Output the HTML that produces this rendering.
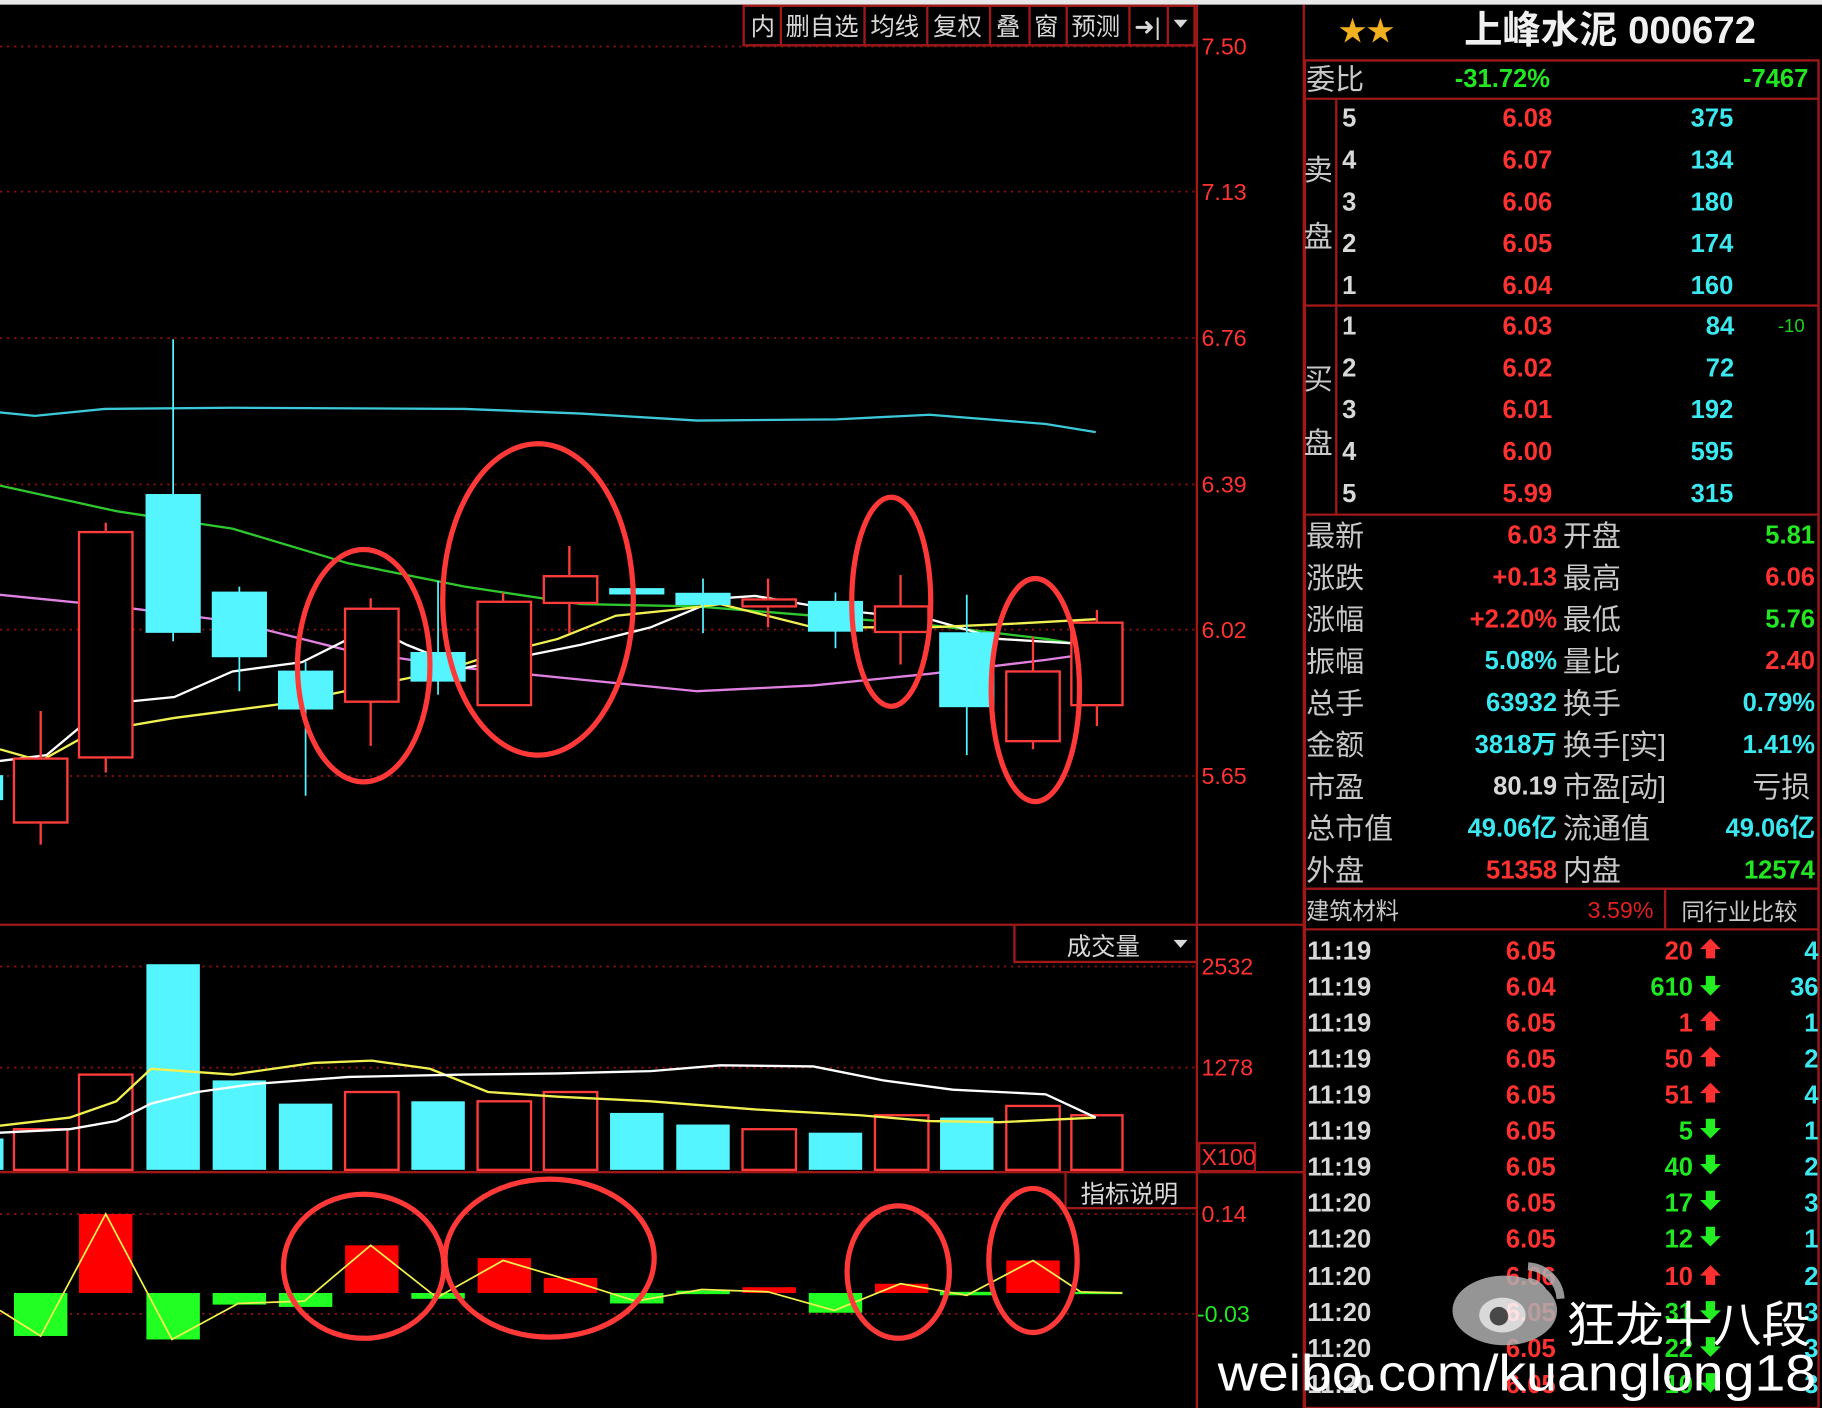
<!DOCTYPE html>
<html><head><meta charset="utf-8"><style>
html,body{margin:0;padding:0;background:#000;width:1822px;height:1408px;overflow:hidden}
svg{display:block}
text{font-family:"Liberation Sans","WenQuanYi Zen Hei","Noto Sans CJK SC",sans-serif}
.n{font-weight:bold;font-size:22px}
.l{fill:#c8c8c8;font-size:25px}
.r{fill:#ff3232}.c{fill:#3ce8f0}.g{fill:#22e622}.w{fill:#d8d8d8}
</style></head><body>
<svg width="1822" height="1408" viewBox="0 0 1568 1212" preserveAspectRatio="none" xmlns="http://www.w3.org/2000/svg">
<rect width="1568" height="1212" fill="#000"/>
<rect x="0" y="0" width="1568" height="4" fill="#e8e8e8"/>
<g stroke="#8a1010" stroke-width="1.5" stroke-dasharray="2,4">
<line x1="0" y1="40" x2="1030" y2="40"/><line x1="0" y1="165" x2="1030" y2="165"/><line x1="0" y1="291" x2="1030" y2="291"/><line x1="0" y1="417" x2="1030" y2="417"/><line x1="0" y1="542" x2="1030" y2="542"/><line x1="0" y1="668" x2="1030" y2="668"/>
<line x1="0" y1="832" x2="1030" y2="832"/><line x1="0" y1="919" x2="1030" y2="919"/>
<line x1="0" y1="1045" x2="1030" y2="1045"/><line x1="0" y1="1131" x2="1030" y2="1131"/>
</g>
<g stroke="#a01818" stroke-width="2" fill="none">
<line x1="1030" y1="4" x2="1030" y2="1212"/>
<line x1="0" y1="796" x2="1122" y2="796"/>
<line x1="0" y1="1009" x2="1122" y2="1009"/>
<line x1="1122" y1="4" x2="1122" y2="1212"/>
<rect x="640" y="5" width="388" height="34"/>
<line x1="672" y1="5" x2="672" y2="39"/><line x1="744" y1="5" x2="744" y2="39"/><line x1="798" y1="5" x2="798" y2="39"/><line x1="852" y1="5" x2="852" y2="39"/><line x1="886" y1="5" x2="886" y2="39"/><line x1="918" y1="5" x2="918" y2="39"/><line x1="972" y1="5" x2="972" y2="39"/><line x1="1005" y1="5" x2="1005" y2="39"/>
<polyline points="873,797 873,828 1030,828"/>
<polyline points="917,1010 917,1040 1030,1040"/>
<rect x="1032" y="984" width="48" height="24"/>
<rect x="1123" y="52" width="442" height="1160"/>
<line x1="1123" y1="85" x2="1565" y2="85"/>
<line x1="1123" y1="263" x2="1565" y2="263"/>
<line x1="1123" y1="443" x2="1565" y2="443"/>
<line x1="1123" y1="765" x2="1565" y2="765"/>
<line x1="1123" y1="800" x2="1565" y2="800"/>
<line x1="1150" y1="85" x2="1150" y2="443"/>
<line x1="1433" y1="765" x2="1433" y2="800"/>
</g>
<g class="w" font-size="21">
<text x="646" y="30">内</text><text x="676" y="30">删自选</text><text x="749" y="30">均线</text><text x="803" y="30">复权</text><text x="857" y="30">叠</text><text x="890" y="30">窗</text><text x="922" y="30">预测</text>
<text x="976" y="30">➜|</text><path d="M1010 17 h12 l-6 7z"/>
<text x="918" y="822" font-size="21">成交量</text><path d="M1010 809 h12 l-6 7z"/>
<text x="930" y="1035" font-size="21">指标说明</text>
</g>
<g fill="#ff3232" font-size="20">
<text x="1034" y="47">7.50</text><text x="1034" y="172">7.13</text><text x="1034" y="298">6.76</text><text x="1034" y="424">6.39</text><text x="1034" y="549">6.02</text><text x="1034" y="675">5.65</text>
<text x="1034" y="839">2532</text><text x="1034" y="926">1278</text><text x="1034" y="1003">X100</text>
<text x="1034" y="1052">0.14</text></g>
<text x="1030" y="1138" font-size="20" fill="#22e622">-0.03</text>
<g fill="none" stroke-width="2">
<polyline stroke="#3cc8d8" points="0,355 30,358 90,352 200,351 400,352 500,356 600,362 720,361 800,357 900,365 943,372"/>
<polyline stroke="#2ec82e" points="0,418 100,440 200,455 300,485 400,505 500,520 600,522 700,530 800,538 900,550 943,557"/>
<polyline stroke="#e080e0" points="0,512 100,522 200,535 300,560 400,575 500,585 600,595 700,590 800,580 900,568 943,562"/>
<polyline stroke="#ffffff" points="0,655 40,650 70,625 100,605 150,600 200,578 260,570 320,540 350,555 400,575 450,565 500,555 560,540 620,515 650,513 720,525 800,533 860,550 943,555"/>
<polyline stroke="#f0f050" points="0,645 35,655 80,630 150,618 250,605 320,590 380,578 420,565 480,550 530,530 580,525 620,520 700,540 800,540 870,537 943,533"/>
</g>
<g stroke="#ff3c3c" stroke-width="2" fill="none">
<line x1="35" y1="612" x2="35" y2="727"/><rect x="12" y="653" width="46" height="55" fill="#000"/>
<line x1="91" y1="450" x2="91" y2="665"/><rect x="68" y="458" width="46" height="194" fill="#000"/>
<line x1="319" y1="515" x2="319" y2="642"/><rect x="297" y="524" width="46" height="80" fill="#000"/>
<line x1="433" y1="510" x2="433" y2="607"/><rect x="411" y="518" width="46" height="89" fill="#000"/>
<line x1="490" y1="470" x2="490" y2="545"/><rect x="468" y="496" width="46" height="23" fill="#000"/>
<line x1="661" y1="498" x2="661" y2="540"/><rect x="639" y="516" width="46" height="6" fill="#000"/>
<line x1="775" y1="495" x2="775" y2="572"/><rect x="753" y="522" width="46" height="22" fill="#000"/>
<line x1="889" y1="548" x2="889" y2="645"/><rect x="866" y="578" width="46" height="60" fill="#000"/>
<line x1="944" y1="525" x2="944" y2="625"/><rect x="922" y="536" width="44" height="71" fill="#000"/>
</g>
<g fill="#55f5ff" stroke="#55f5ff" stroke-width="1.5">
<line x1="149" y1="292" x2="149" y2="552"/><rect x="126" y="426" width="46" height="118"/>
<line x1="206" y1="505" x2="206" y2="595"/><rect x="183" y="510" width="46" height="55"/>
<line x1="263" y1="570" x2="263" y2="685"/><rect x="240" y="578" width="46" height="32"/>
<line x1="377" y1="500" x2="377" y2="598"/><rect x="354" y="562" width="46" height="24"/>
<rect x="525" y="507" width="46" height="4"/>
<line x1="605" y1="498" x2="605" y2="545"/><rect x="582" y="511" width="46" height="9"/>
<line x1="719" y1="510" x2="719" y2="558"/><rect x="696" y="518" width="46" height="25"/>
<line x1="832" y1="512" x2="832" y2="650"/><rect x="809" y="545" width="46" height="63"/>
<rect x="0" y="668" width="2" height="20"/>
</g>
<g stroke="#ff3c3c" stroke-width="2" fill="none">
<rect x="12" y="972" width="46" height="35"/><rect x="68" y="925" width="46" height="82"/><rect x="297" y="940" width="46" height="67"/><rect x="411" y="948" width="46" height="59"/><rect x="468" y="940" width="46" height="67"/><rect x="639" y="972" width="46" height="35"/><rect x="753" y="960" width="46" height="47"/><rect x="866" y="952" width="46" height="55"/><rect x="922" y="960" width="44" height="47"/>
</g>
<g fill="#55f5ff">
<rect x="126" y="830" width="46" height="177"/><rect x="183" y="930" width="46" height="77"/><rect x="240" y="950" width="46" height="57"/><rect x="354" y="948" width="46" height="59"/><rect x="525" y="958" width="46" height="49"/><rect x="582" y="968" width="46" height="39"/><rect x="696" y="975" width="46" height="32"/><rect x="809" y="962" width="46" height="45"/><rect x="0" y="980" width="3" height="27"/>
</g>
<g fill="none" stroke-width="2">
<polyline stroke="#f0f050" points="0,969 60,962 100,948 130,920 200,925 270,915 320,913 370,920 420,940 480,944 560,948 650,955 740,960 800,965 860,966 943,962"/>
<polyline stroke="#ffffff" points="0,975 60,972 100,965 130,950 170,940 220,933 300,927 400,925 480,924 560,922 620,917 700,918 760,930 820,938 900,942 943,962"/>
</g>
<g fill="#ff0000">
<rect x="68" y="1045" width="46" height="68"/><rect x="297" y="1072" width="46" height="41"/><rect x="411" y="1083" width="46" height="30"/><rect x="468" y="1100" width="46" height="13"/><rect x="639" y="1108" width="46" height="5"/><rect x="753" y="1105" width="46" height="8"/><rect x="866" y="1085" width="46" height="28"/>
</g>
<g fill="#22ff22">
<rect x="12" y="1113" width="46" height="37"/><rect x="126" y="1113" width="46" height="40"/><rect x="183" y="1113" width="46" height="10"/><rect x="240" y="1113" width="46" height="12"/><rect x="354" y="1113" width="46" height="5"/><rect x="525" y="1113" width="46" height="9"/><rect x="582" y="1111" width="46" height="3"/><rect x="696" y="1113" width="46" height="17"/><rect x="809" y="1112" width="46" height="3"/><rect x="922" y="1112" width="44" height="2"/>
</g>
<polyline fill="none" stroke="#f0f050" stroke-width="1.5" points="0,1128 35,1150 91,1045 148,1153 205,1122 262,1120 319,1072 376,1117 433,1085 490,1102 547,1120 604,1110 661,1112 718,1128 775,1105 832,1115 889,1085 930,1112 966,1113"/>
<g fill="none" stroke="#ff3838" stroke-width="4.5">
<ellipse cx="313" cy="573" rx="57" ry="100"/><ellipse cx="463" cy="516" rx="82" ry="134"/><ellipse cx="767" cy="518" rx="34" ry="90"/><ellipse cx="891" cy="594" rx="38" ry="96"/>
<ellipse cx="313" cy="1090" rx="69" ry="62"/><ellipse cx="473" cy="1083" rx="90" ry="68"/><ellipse cx="773" cy="1095" rx="44" ry="57"/><ellipse cx="889" cy="1085" rx="38" ry="62"/>
</g>
<text x="1152" y="35" font-size="24" fill="#f0b020">★★</text>
<text x="1260" y="37" font-size="33" font-weight="bold" fill="#f0f0f0" font-family="Liberation Serif,'Noto Serif CJK SC',serif">上峰水泥 000672</text>
<text x="1124" y="77" class="l">委比</text><text x="1252" y="75" class="n g">-31.72%</text><text x="1500" y="75" class="n g">-7467</text>
<text x="1122" y="155" class="l">卖</text><text x="1122" y="212" class="l">盘</text>
<text x="1122" y="335" class="l">买</text><text x="1122" y="390" class="l">盘</text>
<g class="n">
<text x="1155" y="109" class="w">5</text><text x="1293" y="109" class="r">6.08</text><text x="1455" y="109" class="c">375</text>
<text x="1155" y="145" class="w">4</text><text x="1293" y="145" class="r">6.07</text><text x="1455" y="145" class="c">134</text>
<text x="1155" y="181" class="w">3</text><text x="1293" y="181" class="r">6.06</text><text x="1455" y="181" class="c">180</text>
<text x="1155" y="217" class="w">2</text><text x="1293" y="217" class="r">6.05</text><text x="1455" y="217" class="c">174</text>
<text x="1155" y="253" class="w">1</text><text x="1293" y="253" class="r">6.04</text><text x="1455" y="253" class="c">160</text>
<text x="1155" y="288" class="w">1</text><text x="1293" y="288" class="r">6.03</text><text x="1468" y="288" class="c">84</text><text x="1530" y="286" fill="#22d022" font-size="16" font-weight="normal">-10</text>
<text x="1155" y="324" class="w">2</text><text x="1293" y="324" class="r">6.02</text><text x="1468" y="324" class="c">72</text>
<text x="1155" y="360" class="w">3</text><text x="1293" y="360" class="r">6.01</text><text x="1455" y="360" class="c">192</text>
<text x="1155" y="396" class="w">4</text><text x="1293" y="396" class="r">6.00</text><text x="1455" y="396" class="c">595</text>
<text x="1155" y="432" class="w">5</text><text x="1293" y="432" class="r">5.99</text><text x="1455" y="432" class="c">315</text>
</g>
<g class="l">
<text x="1124" y="470">最新</text><text x="1345" y="470">开盘</text>
<text x="1124" y="506">涨跌</text><text x="1345" y="506">最高</text>
<text x="1124" y="542">涨幅</text><text x="1345" y="542">最低</text>
<text x="1124" y="578">振幅</text><text x="1345" y="578">量比</text>
<text x="1124" y="614">总手</text><text x="1345" y="614">换手</text>
<text x="1124" y="650">金额</text><text x="1345" y="650">换手[实]</text>
<text x="1124" y="686">市盈</text><text x="1345" y="686">市盈[动]</text>
<text x="1124" y="722">总市值</text><text x="1345" y="722">流通值</text>
<text x="1124" y="758">外盘</text><text x="1345" y="758">内盘</text>
<text x="1508" y="686">亏损</text>
</g>
<g class="n" text-anchor="end">
<text x="1340" y="468" class="r">6.03</text><text x="1562" y="468" class="g">5.81</text>
<text x="1340" y="504" class="r">+0.13</text><text x="1562" y="504" class="r">6.06</text>
<text x="1340" y="540" class="r">+2.20%</text><text x="1562" y="540" class="g">5.76</text>
<text x="1340" y="576" class="c">5.08%</text><text x="1562" y="576" class="r">2.40</text>
<text x="1340" y="612" class="c">63932</text><text x="1562" y="612" class="c">0.79%</text>
<text x="1340" y="648" class="c">3818万</text><text x="1562" y="648" class="c">1.41%</text>
<text x="1340" y="684" class="w">80.19</text>
<text x="1340" y="720" class="c">49.06亿</text><text x="1562" y="720" class="c">49.06亿</text>
<text x="1340" y="756" class="r">51358</text><text x="1562" y="756" class="g">12574</text>
</g>
<text x="1124" y="791" font-size="20" fill="#c8c8c8">建筑材料</text><text x="1423" y="790" font-size="20" fill="#e02020" text-anchor="end">3.59%</text><text x="1447" y="792" font-size="20" fill="#c8c8c8">同行业比较</text>
<g class="n">
<g class="w"><text x="1125" y="826">11:19</text><text x="1125" y="857">11:19</text><text x="1125" y="888">11:19</text><text x="1125" y="919">11:19</text><text x="1125" y="950">11:19</text><text x="1125" y="981">11:19</text><text x="1125" y="1012">11:19</text><text x="1125" y="1043">11:20</text><text x="1125" y="1074">11:20</text><text x="1125" y="1106">11:20</text><text x="1125" y="1137">11:20</text><text x="1125" y="1168">11:20</text><text x="1125" y="1199">11:20</text></g>
<g class="r"><text x="1296" y="826">6.05</text><text x="1296" y="857">6.04</text><text x="1296" y="888">6.05</text><text x="1296" y="919">6.05</text><text x="1296" y="950">6.05</text><text x="1296" y="981">6.05</text><text x="1296" y="1012">6.05</text><text x="1296" y="1043">6.05</text><text x="1296" y="1074">6.05</text><text x="1296" y="1106">6.06</text><text x="1296" y="1137">6.05</text><text x="1296" y="1168">6.05</text><text x="1296" y="1199">6.05</text></g>
<g text-anchor="end">
<text x="1457" y="826" class="r">20</text><text x="1457" y="857" class="g">610</text><text x="1457" y="888" class="r">1</text><text x="1457" y="919" class="r">50</text><text x="1457" y="950" class="r">51</text><text x="1457" y="981" class="g">5</text><text x="1457" y="1012" class="g">40</text><text x="1457" y="1043" class="g">17</text><text x="1457" y="1074" class="g">12</text><text x="1457" y="1106" class="r">10</text><text x="1457" y="1137" class="g">31</text><text x="1457" y="1168" class="g">22</text><text x="1457" y="1199" class="g">10</text>
<g class="c"><text x="1565" y="826">4</text><text x="1565" y="857">36</text><text x="1565" y="888">1</text><text x="1565" y="919">2</text><text x="1565" y="950">4</text><text x="1565" y="981">1</text><text x="1565" y="1012">2</text><text x="1565" y="1043">3</text><text x="1565" y="1074">1</text><text x="1565" y="1106">2</text><text x="1565" y="1137">3</text><text x="1565" y="1168">3</text><text x="1565" y="1199">3</text></g>
</g>
</g>
<g>
<path fill="#ff3030" d="M1472 808 l9 9 h-5 v8 h-8 v-8 h-5z M1472 870 l9 9 h-5 v8 h-8 v-8 h-5z M1472 901 l9 9 h-5 v8 h-8 v-8 h-5z M1472 932 l9 9 h-5 v8 h-8 v-8 h-5z M1472 1089 l9 9 h-5 v8 h-8 v-8 h-5z"/>
<path fill="#22ee22" d="M1468 840 h8 v8 h5 l-9 9 l-9 -9 h5z M1468 963 h8 v8 h5 l-9 9 l-9 -9 h5z M1468 994 h8 v8 h5 l-9 9 l-9 -9 h5z M1468 1025 h8 v8 h5 l-9 9 l-9 -9 h5z M1468 1056 h8 v8 h5 l-9 9 l-9 -9 h5z M1468 1120 h8 v8 h5 l-9 9 l-9 -9 h5z M1468 1151 h8 v8 h5 l-9 9 l-9 -9 h5z M1468 1182 h8 v8 h5 l-9 9 l-9 -9 h5z"/>
</g>
<g opacity="0.85">
<ellipse cx="1295" cy="1128" rx="45" ry="30" fill="#b0b0b0"/>
<ellipse cx="1293" cy="1132" rx="20" ry="15" fill="#fff"/>
<circle cx="1290" cy="1133" r="8" fill="#555"/>
<path d="M1315 1090 a30 30 0 0 1 28 28" stroke="#b0b0b0" stroke-width="7" fill="none"/>
<path d="M1315 1103 a16 16 0 0 1 15 15" stroke="#b0b0b0" stroke-width="6" fill="none"/>
</g>
<text x="1348" y="1155" font-size="42" fill="#fff" font-family="'WenQuanYi Zen Hei','Noto Sans CJK SC',sans-serif">狂龙十八段</text>
<text x="1048" y="1197" font-size="44" fill="#fff" textLength="515" lengthAdjust="spacingAndGlyphs" font-family="'DejaVu Sans',sans-serif">weibo.com/kuanglong18</text>
</svg>
</body></html>
